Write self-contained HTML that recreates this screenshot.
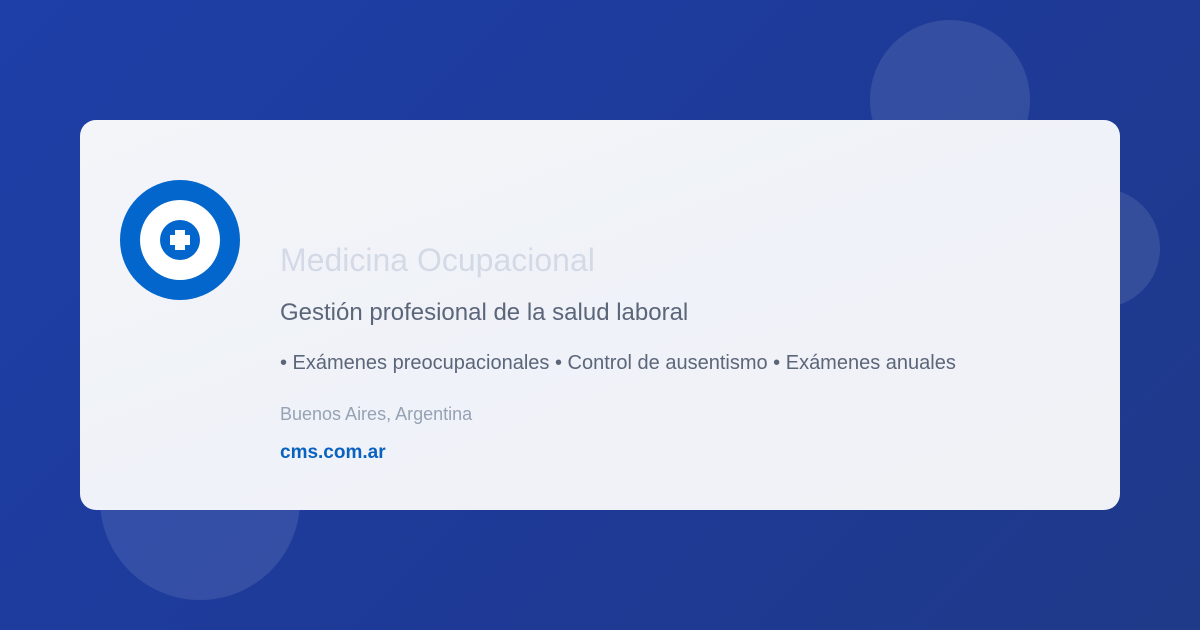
<!DOCTYPE html>
<html><head><meta charset="utf-8"><style>
body{margin:0;width:1200px;height:630px;overflow:hidden;font-family:"Liberation Sans",sans-serif;background:linear-gradient(135deg,#1e3fa8 0%,#1e3a96 60%,#1f3a88 100%);position:relative}
.c{position:absolute;border-radius:50%;background:rgba(255,255,255,0.1)}
.card{position:absolute;left:80px;top:120px;width:1040px;height:390px;border-radius:16px;background:linear-gradient(160deg,#f4f5f9,#eff2f8 50%,#f1f2f6);}
.t{position:absolute;left:280px;white-space:nowrap}
</style></head><body>
<div class="c" style="left:870px;top:20px;width:160px;height:160px"></div>
<div class="c" style="left:1040px;top:188px;width:120px;height:120px"></div>
<div class="c" style="left:100px;top:400px;width:200px;height:200px"></div>
<div class="card"></div>
<svg style="position:absolute;left:120px;top:180px" width="120" height="120" viewBox="0 0 120 120">
<circle cx="60" cy="60" r="60" fill="#0366cc"/><circle cx="60" cy="60" r="40" fill="#fff"/><circle cx="60" cy="60" r="20" fill="#0366cc"/>
<path d="M55 50h10v5h5v10h-5v5h-10v-5h-5v-10h5z" fill="#fff"/></svg>
<div class="t" style="top:242px;font-size:32px;color:#d3dae6">Medicina Ocupacional</div>
<div class="t" style="top:299px;font-size:24px;color:#5c6679">Gestión profesional de la salud laboral</div>
<div class="t" style="top:352px;font-size:20px;color:#5c6679">• Exámenes preocupacionales • Control de ausentismo • Exámenes anuales</div>
<div class="t" style="top:404px;font-size:18px;color:#97a2b4">Buenos Aires, Argentina</div>
<div class="t" style="top:442px;font-size:19px;font-weight:bold;color:#0a62c0">cms.com.ar</div>
</body></html>
